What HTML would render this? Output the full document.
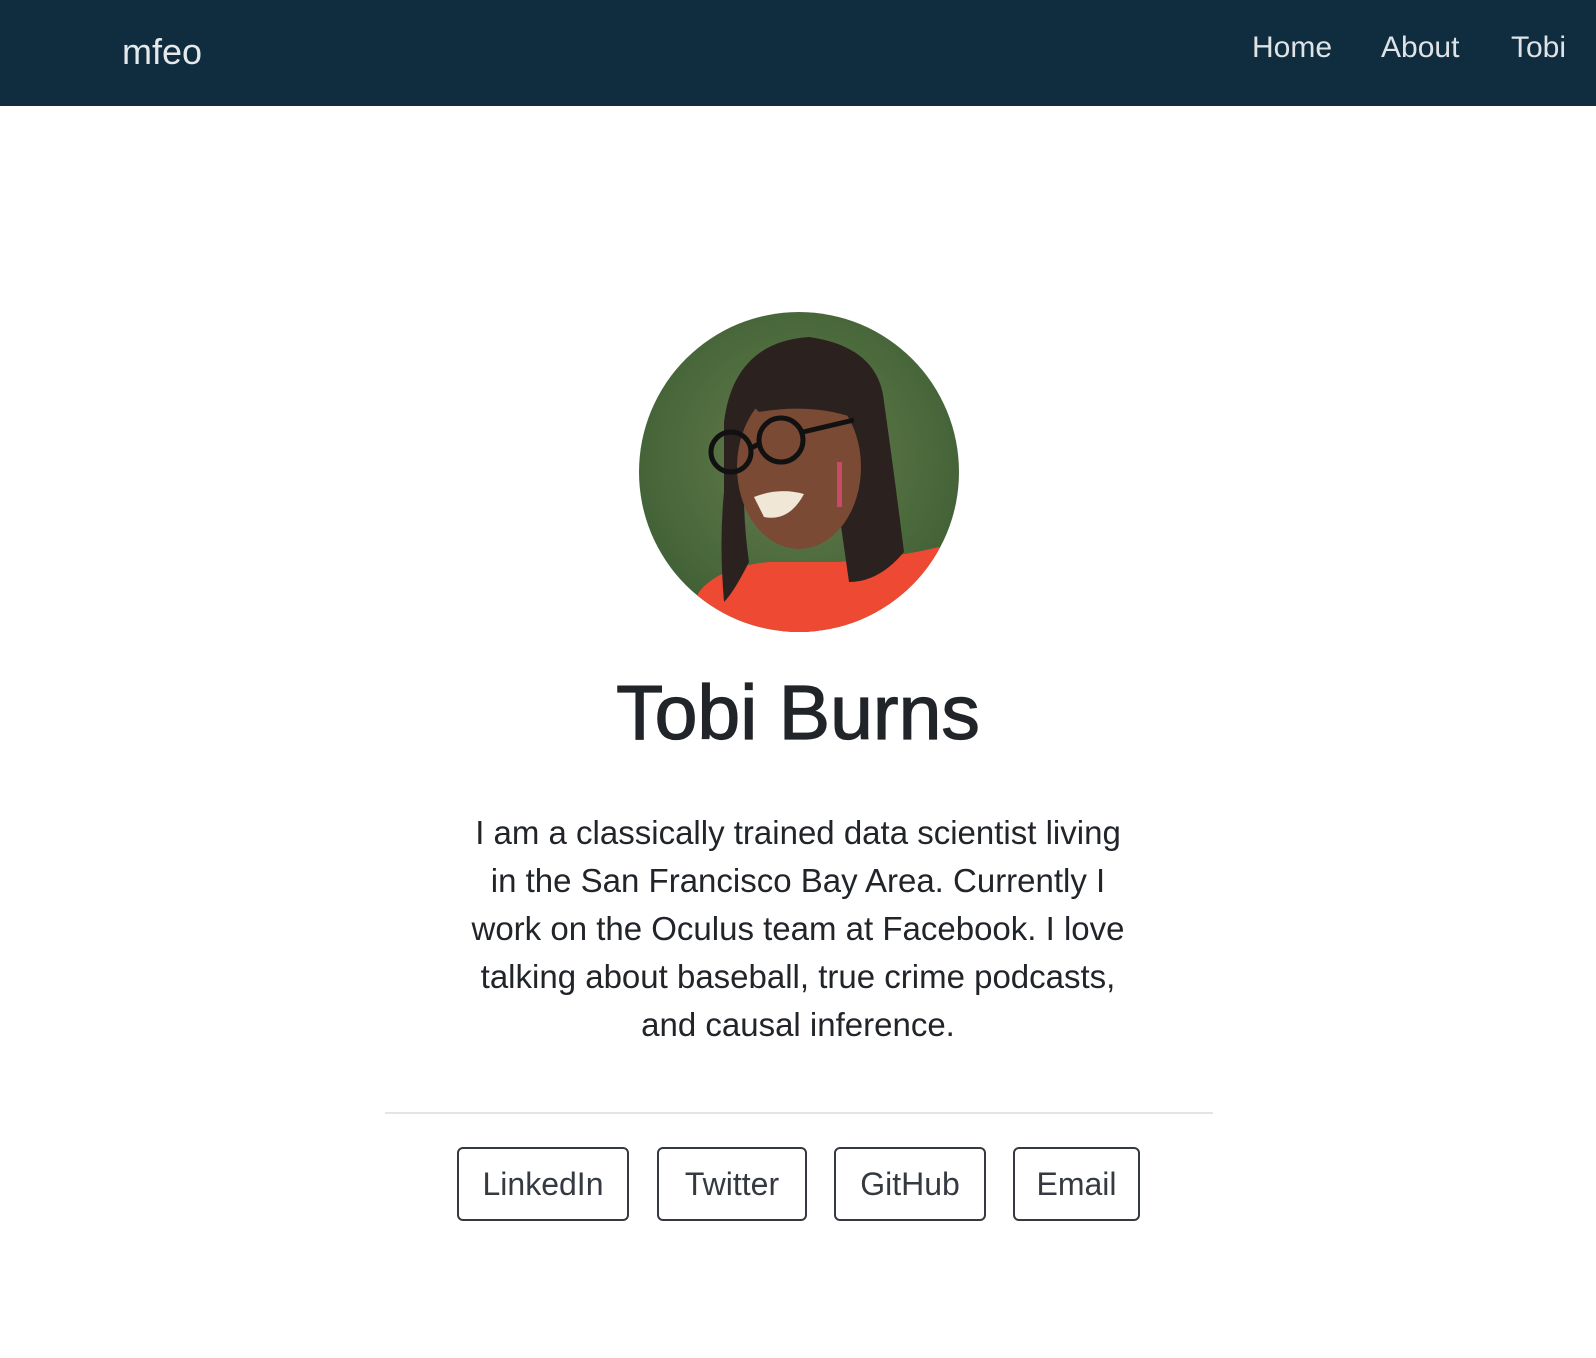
<!DOCTYPE html>
<html><head><meta charset="utf-8"><style>
*{margin:0;padding:0;box-sizing:border-box}
html,body{width:1596px;height:1358px;background:#fff;overflow:hidden;font-family:"Liberation Sans",sans-serif;color:#212529}
.nav{position:absolute;left:0;top:0;width:1596px;height:106px;background:#0f2d3f}
.brand{position:absolute;left:122px;top:30px;font-size:36px;line-height:44px;color:#e6e9eb}
.nl{position:absolute;top:30px;font-size:30px;line-height:36px;color:#dfe3e6}
.av{position:absolute;left:639px;top:312px;width:320px;height:320px;border-radius:50%;overflow:hidden}
h1{position:absolute;left:0;width:1596px;top:668px;text-align:center;font-size:77px;line-height:90px;font-weight:normal;-webkit-text-stroke:1.2px #212529;color:#212529}
p{position:absolute;left:0;width:1596px;top:809px;text-align:center;font-size:33px;line-height:48px}
.hr{position:absolute;left:385px;top:1112px;width:828px;height:2px;background:#e4e4e4}
.b{position:absolute;top:1147px;height:74px;border:2px solid #343a40;border-radius:6px;font-size:32px;line-height:70px;text-align:center;color:#343a40}
</style></head><body>
<div class="nav">
<div class="brand">mfeo</div>
<div class="nl" style="left:1252px">Home</div>
<div class="nl" style="left:1381px">About</div>
<div class="nl" style="left:1511px">Tobi</div>
</div>
<div class="av"><svg width="320" height="320" viewBox="0 0 320 320">
<defs><radialGradient id="g" cx="50%" cy="45%" r="65%"><stop offset="0" stop-color="#6a7d52"/><stop offset="0.6" stop-color="#4b6a3c"/><stop offset="1" stop-color="#3d5a33"/></radialGradient></defs>
<rect width="320" height="320" fill="url(#g)"/>
<path d="M60 280 Q80 255 130 250 L200 250 Q260 245 300 235 L320 320 L40 320Z" fill="#ee4a33"/>
<path d="M85 110 Q95 30 170 25 Q240 35 245 90 Q255 160 265 240 Q240 270 210 270 L200 200 Q190 140 180 120 L110 120 Q100 180 110 250 Q95 280 85 290 Q80 230 85 180Z" fill="#2b2220"/>
<ellipse cx="160" cy="155" rx="62" ry="82" fill="#7a4a35"/>
<path d="M105 85 Q140 60 200 70 Q230 85 225 110 Q180 90 120 100Z" fill="#2b2220"/>
<circle cx="92" cy="140" r="20" fill="none" stroke="#111" stroke-width="5"/>
<circle cx="142" cy="128" r="22" fill="none" stroke="#111" stroke-width="5"/>
<path d="M112 136 L120 132 M164 120 L215 108" stroke="#111" stroke-width="5"/>
<path d="M115 185 Q140 175 165 182 Q150 210 125 205Z" fill="#f1e7d6"/>
<rect x="198" y="150" width="5" height="45" fill="#c84b6a"/>
</svg></div>
<h1>Tobi Burns</h1>
<p>I am a classically trained data scientist living<br>in the San Francisco Bay Area. Currently I<br>work on the Oculus team at Facebook. I love<br>talking about baseball, true crime podcasts,<br>and causal inference.</p>
<div class="hr"></div>
<div class="b" style="left:457px;width:172px">LinkedIn</div>
<div class="b" style="left:657px;width:150px">Twitter</div>
<div class="b" style="left:834px;width:152px">GitHub</div>
<div class="b" style="left:1013px;width:127px">Email</div>
</body></html>
